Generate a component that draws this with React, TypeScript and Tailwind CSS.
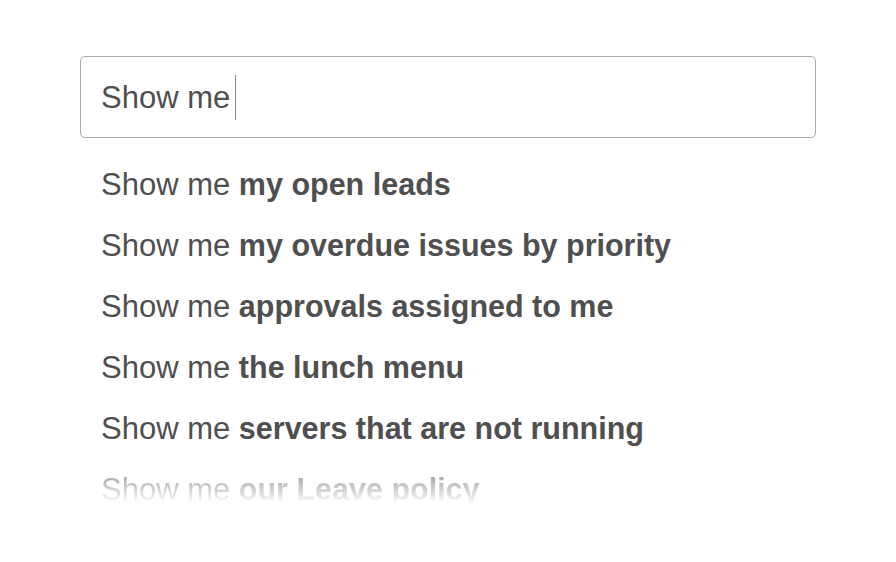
import React from "react";

const suggestions = [
  "my open leads",
  "my overdue issues by priority",
  "approvals assigned to me",
  "the lunch menu",
  "servers that are not running",
];

export default function App() {
  return (
    <div className="min-h-[562px] w-[896px] bg-white pl-[80px] pt-[56px] text-[#4f4f4f] font-['Liberation_Sans',Arial,sans-serif]">
      <div className="w-[736px]">
        <div className="flex h-[82px] items-center rounded-[5px] border-[1.5px] border-[#ababab] pl-[20px]">
          <span className="text-[31px] leading-none">Show me</span>
          <span className="ml-[5px] h-[45px] w-px bg-[#8a8a8a]" />
        </div>
        <ul className="mt-[16px] pl-[21px] text-[31px] leading-[61px]">
          {suggestions.map((s) => (
            <li key={s}>
              Show me <span className="text-[30.5px] font-bold">{s}</span>
            </li>
          ))}
          <li className="w-fit bg-[linear-gradient(to_bottom,#a8a8a8_28%,#ffffff_74%)] bg-clip-text text-transparent">
            Show me <span className="text-[30.5px] font-bold">our Leave policy</span>
          </li>
        </ul>
      </div>
    </div>
  );
}
